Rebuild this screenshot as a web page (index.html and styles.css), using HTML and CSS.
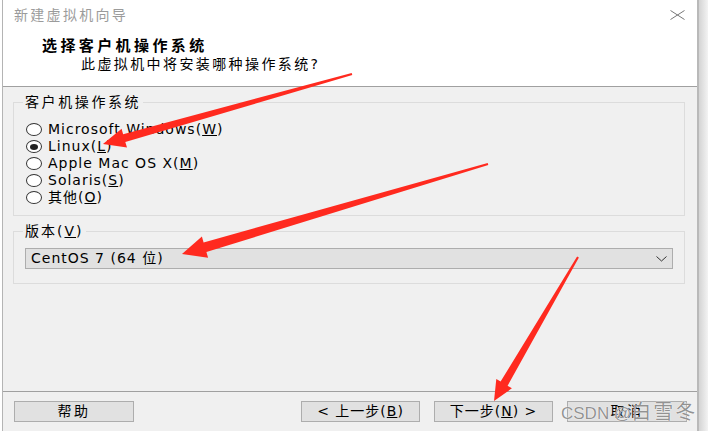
FILE: index.html
```html
<!DOCTYPE html>
<html lang="zh-CN">
<head>
<meta charset="utf-8">
<title>新建虚拟机向导</title>
<link rel="stylesheet" href="styles.css">
</head>
<body>
<div class="screen">
  <div class="window">
    <div class="titlebar">
      <span class="title">新建虚拟机向导</span>
      <svg class="close" width="15" height="10" viewBox="0 0 15 10"><path d="M0.5 0.5 L14.5 9.5 M14.5 0.5 L0.5 9.5" stroke="#777" stroke-width="1" fill="none"/></svg>
    </div>
    <div class="header">
      <h1>选择客户机操作系统</h1>
      <p>此虚拟机中将安装哪种操作系统?</p>
    </div>
    <div class="content">
      <fieldset class="group">
        <legend>客户机操作系统</legend>
        <ul class="os-list">
          <li class="opt"><span class="radio"></span><span>Microsoft Windows(<u>W</u>)</span></li>
          <li class="opt"><span class="radio checked"></span><span>Linux(<u>L</u>)</span></li>
          <li class="opt"><span class="radio"></span><span>Apple Mac OS X(<u>M</u>)</span></li>
          <li class="opt"><span class="radio"></span><span>Solaris(<u>S</u>)</span></li>
          <li class="opt"><span class="radio"></span><span>其他(<u>O</u>)</span></li>
        </ul>
      </fieldset>
      <fieldset class="group">
        <legend class="legend-v">版本(<u>V</u>)</legend>
        <div class="select">
          <span>CentOS 7 (64 位)</span>
          <svg width="11" height="6" viewBox="0 0 11 6"><path d="M0.5 0.5 L5.5 5 L10.5 0.5" fill="none" stroke="#333" stroke-width="1"/></svg>
        </div>
      </fieldset>
    </div>
    <div class="footer">
      <button class="btn wide">帮助</button>
      <div class="btn-group">
        <button class="btn narrow">&lt; 上一步(<u>B</u>)</button>
        <button class="btn narrow">下一步(<u>N</u>) &gt;</button>
        <button class="btn wide">取消</button>
      </div>
    </div>
  </div>
  <div class="shadow"></div>

  <svg class="annotations" width="708" height="431" viewBox="0 0 708 431">
    <polygon fill="#ff2a1f" points="351.7,72.9 123.1,134.2 121.6,128.8 103,144 127.0,147.6 125.3,141.9 352.3,75.1"/>
    <polygon fill="#ff2a1f" points="487.7,162.9 203.6,242.4 201.9,236.6 182,254 208.1,257.8 206.4,252.0 488.3,165.1"/>
    <polygon fill="#ff2a1f" points="577.1,256.5 500.6,381.6 496.3,379.1 494,401 511.9,388.3 507.6,385.8 578.9,257.5"/>
  </svg>
  <div class="watermark"><span class="wm-latin">CSDN @</span><span class="wm-cjk">白雪冬</span></div>
</div>
</body>
</html>
```

FILE: styles.css
```css
* {
  box-sizing: border-box;
}

html,
body {
  margin: 0;
  background: #ffffff;
}

body {
  font-family: "DejaVu Sans", "Noto Sans CJK SC", sans-serif;
  font-size: 14px;
  color: #000000;
}

.screen {
  position: relative;
  width: 708px;
  height: 431px;
  display: flex;
  overflow: hidden;
}

.window {
  margin-left: 2px;
  width: 697px;
  height: 431px;
  border-left: 1px solid #b4b4b4;
  border-right: 2px solid #b9b9b9;
  background: #f0f0f0;
  display: flex;
  flex-direction: column;
}

.shadow {
  width: 9px;
  background: linear-gradient(to right, #d4d4d4, #f3f3f3);
}

.titlebar {
  height: 30px;
  background: #ffffff;
  display: flex;
  align-items: center;
  justify-content: space-between;
  padding: 0 12px 0 11px;
}

.title {
  color: #9b9b9b;
  font-size: 14px;
  letter-spacing: 2.3px;
  line-height: 30px;
}

.header {
  height: 57px;
  background: #ffffff;
  border-bottom: 1px solid #a0a0a0;
  padding-top: 7px;
}

.header h1 {
  margin: 0;
  padding-left: 39px;
  font-size: 15px;
  font-weight: bold;
  letter-spacing: 3.4px;
  line-height: 18px;
}

.header p {
  margin: 0;
  padding-left: 78px;
  font-size: 14px;
  letter-spacing: 2.4px;
  line-height: 18px;
}

.content {
  flex: 1;
  padding: 7px 12px 0 10px;
  display: flex;
  flex-direction: column;
  gap: 7px;
}

.group {
  margin: 0;
  padding: 0;
  min-width: 0;
  border: 1px solid #dcdcdc;
}

.group legend {
  margin-left: 9px;
  padding: 0 2px;
  font-size: 14px;
  line-height: 16px;
  letter-spacing: 2.6px;
}

.group .legend-v {
  letter-spacing: 2px;
}

.os-list {
  list-style: none;
  margin: 0;
  padding: 11px 0 9px 12px;
}

.opt {
  height: 17px;
  display: flex;
  align-items: center;
  gap: 6px;
  line-height: 17px;
  letter-spacing: 1px;
}

.radio {
  width: 16px;
  height: 13px;
  border: 1px solid #333333;
  border-radius: 50%;
  background: #ffffff;
  display: flex;
  align-items: center;
  justify-content: center;
  flex: none;
}

.radio.checked::after {
  content: "";
  width: 8px;
  height: 6px;
  border-radius: 50%;
  background: #222222;
}

.select {
  margin: 9px 11px 14px 11px;
  height: 21px;
  border: 1px solid #adadad;
  background: #e1e1e1;
  display: flex;
  align-items: center;
  justify-content: space-between;
  padding: 0 5px 0 5px;
  letter-spacing: 1px;
  line-height: 19px;
}

.footer {
  height: 40px;
  border-top: 1px solid #a0a0a0;
  padding: 9px 10px 0 11px;
  display: flex;
  justify-content: space-between;
  align-items: flex-start;
}

.btn-group {
  display: flex;
  gap: 14px;
}

.btn {
  height: 21px;
  margin: 0;
  padding: 0;
  border: 1px solid #adadad;
  background: #e1e1e1;
  font: inherit;
  font-size: 14px;
  color: #000000;
  line-height: 19px;
  letter-spacing: 1px;
  display: flex;
  align-items: center;
  justify-content: center;
}

.btn.wide {
  width: 120px;
  letter-spacing: 2.5px;
}

.btn.narrow {
  width: 119px;
}

.annotations {
  position: absolute;
  left: 0;
  top: 0;
  pointer-events: none;
}

.watermark {
  position: absolute;
  left: 561px;
  top: 399px;
  line-height: 24px;
  color: rgba(110, 110, 110, 0.75);
  text-shadow: 0 0 1px #ffffff, 0 0 1px #ffffff;
  pointer-events: none;
  white-space: nowrap;
}

.wm-latin {
  font-family: "Liberation Sans", "Noto Sans CJK SC", sans-serif;
  font-size: 17px;
}

.wm-cjk {
  font-family: "Noto Sans CJK SC", sans-serif;
  font-size: 20px;
  letter-spacing: 2px;
}
```
